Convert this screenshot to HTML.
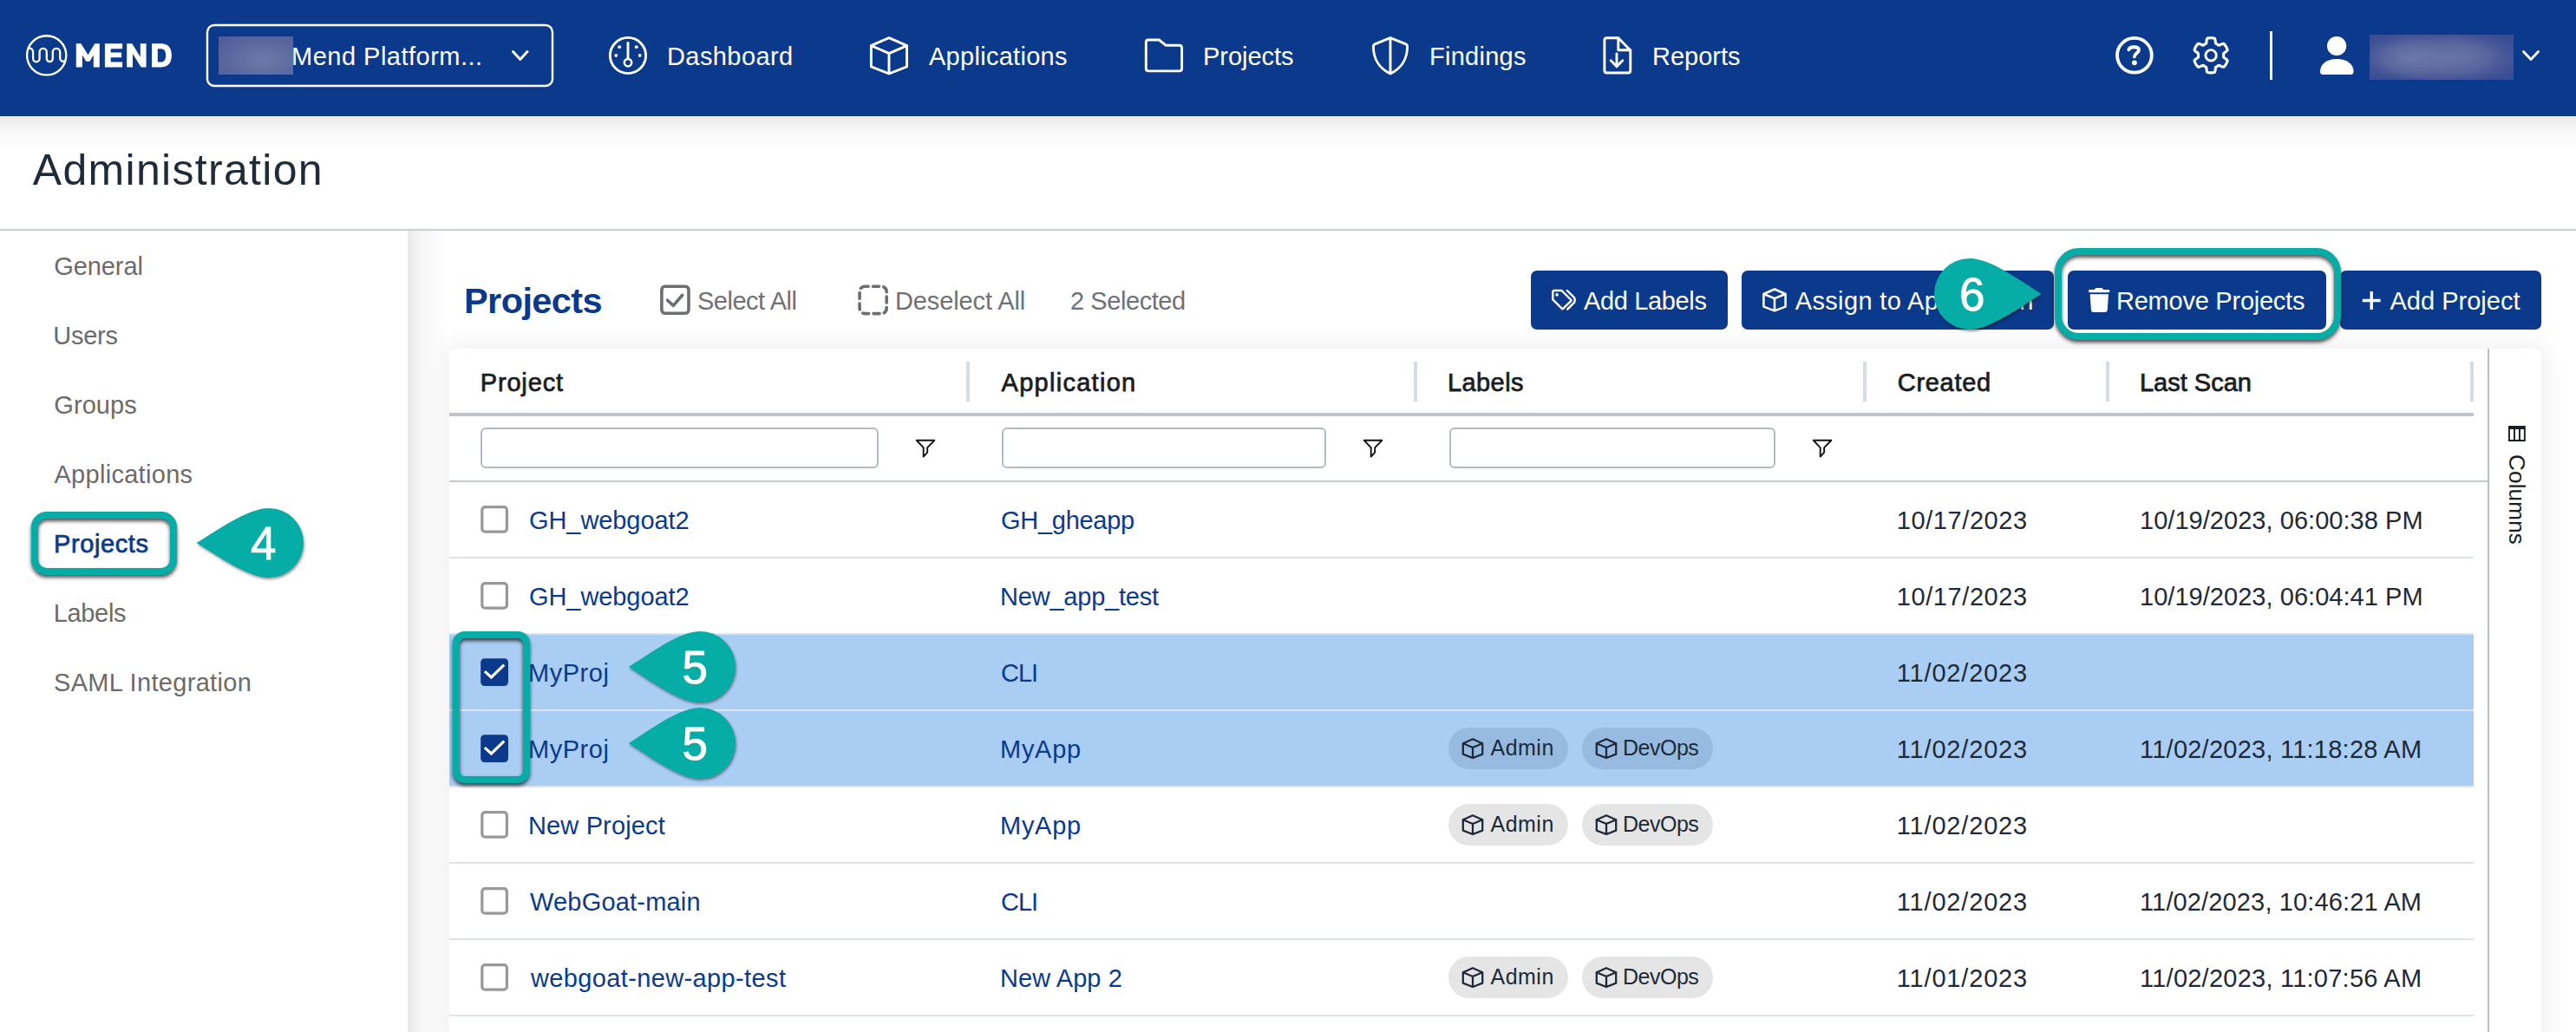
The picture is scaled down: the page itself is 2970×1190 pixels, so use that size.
<!DOCTYPE html><html><head><meta charset='utf-8'><title>Mend - Administration</title><style>
*{box-sizing:border-box}
html,body{margin:0;padding:0}
body{width:2970px;height:1190px;overflow:hidden;position:relative;background:#fff;font-family:"Liberation Sans",sans-serif}
.a{position:absolute}
.t{position:absolute;line-height:1;white-space:nowrap}
svg{position:absolute;overflow:visible}
</style></head><body>
<div class=a style='left:0;top:0;width:2970px;height:134px;background:#0b3a8c'></div>
<div class=a style='left:0;top:134px;width:2970px;height:40px;background:linear-gradient(rgba(0,0,0,0.085),rgba(0,0,0,0.045) 30%,rgba(0,0,0,0.015) 65%,rgba(0,0,0,0))'></div>
<svg class=a style='left:0;top:0' width=2970 height=134 viewBox='0 0 2970 134' fill='none' stroke='#fff' stroke-linecap='round' stroke-linejoin='round'>
<circle cx='53.7' cy='63.8' r='22.6' stroke-width='2.4'/>
<path stroke-width='2.3' d='M33.2 55.6 C36 55.2 38.1 57 38.1 60 L38.1 67.6 A3.75 3.75 0 0 0 45.6 67.6 L45.6 60 A4.1 4.1 0 0 1 53.8 60 L53.8 67.6 A3.5 3.5 0 0 0 60.8 67.6 L60.8 60 A4.2 4.2 0 0 1 69.2 60 L69.2 66.8 C69.2 70.2 71.8 71.6 74.6 70.2'/>
<path fill='#fff' stroke='none' fill-rule='evenodd' d='M87.8 77.4 L87.8 50.3 L93.4 50.3 L101.5 63.2 L109.3 50.3 L114.8 50.3 L114.8 77.4 L107.8 77.4 L107.8 63.5 L103.5 70.8 L99.2 70.8 L94.9 63.5 L94.9 77.4 Z M120.9 50.3 L141.1 50.3 L141.1 56.2 L127.7 56.2 L127.7 60.5 L140.1 60.5 L140.1 66.3 L127.7 66.3 L127.7 71.6 L141.1 71.6 L141.1 77.4 L120.9 77.4 Z M146.2 77.4 L146.2 50.3 L152.3 50.3 L161.8 65.8 L161.8 50.3 L168.6 50.3 L168.6 77.4 L162.7 77.4 L153 62 L153 77.4 Z M175 50.3 L186 50.3 C193.8 50.3 197.9 55.2 197.9 63.8 C197.9 72.5 193.8 77.4 186 77.4 L175 77.4 Z M181.8 56.2 L185.4 56.2 C189.6 56.2 191.1 59.2 191.1 63.8 C191.1 68.5 189.6 71.6 185.4 71.6 L181.8 71.6 Z'/>
<rect x='239' y='29' width='398' height='70' rx='8' stroke-width='2.4'/>
<path stroke-width='3' d='M591.5 59.5 L599.8 68.5 L608 59.5'/>
<circle cx='724' cy='64' r='20.6' stroke-width='2.9'/>
<path stroke-width='2.9' d='M724 49.5 L724 67.2'/>
<circle cx='724' cy='72.2' r='4.2' stroke-width='2.5'/>
<circle cx='714.2' cy='54.2' r='1.9' fill='#fff' stroke='none'/>
<circle cx='733.8' cy='54.2' r='1.9' fill='#fff' stroke='none'/>
<circle cx='710.3' cy='63.9' r='1.9' fill='#fff' stroke='none'/>
<circle cx='737.7' cy='63.9' r='1.9' fill='#fff' stroke='none'/>
<path stroke-width='2.9' d='M1025 43.6 L1045.6 52.6 L1045.6 76.8 L1025 85 L1004.4 76.8 L1004.4 52.6 Z M1004.4 52.6 L1025 61.6 L1045.6 52.6 M1025 61.6 L1025 85'/>
<path stroke-width='2.9' d='M1321.3 48.8 Q1321.3 46 1324 46 L1336.3 46 L1344.3 52.3 L1359.6 52.3 Q1362.6 52.3 1362.6 55.3 L1362.6 79 Q1362.6 81.9 1359.6 81.9 L1324.3 81.9 Q1321.3 81.9 1321.3 79 Z'/>
<path stroke-width='2.9' d='M1603 43.6 L1585.2 50.8 Q1583.4 51.6 1583.4 53.6 C1583.4 68.5 1591 79.5 1603 85 C1615 79.5 1622.6 68.5 1622.6 53.6 Q1622.6 51.6 1620.8 50.8 Z M1603 43.6 L1603 85'/>
<path stroke-width='2.9' d='M1849.9 46.5 Q1849.9 43.8 1852.6 43.8 L1865.8 43.8 L1879.8 58 L1879.8 81.2 Q1879.8 84 1877 84 L1852.6 84 Q1849.9 84 1849.9 81.2 Z M1865.8 43.8 L1865.8 57.8 L1879.8 57.8 M1864 62 L1864 76.6 M1857.2 69.8 L1864 76.6 L1870.8 69.8'/>
<circle cx='2460.9' cy='63.8' r='19.9' stroke-width='3.8'/>
<path stroke-width='3.8' d='M2454.3 57.4 C2455.6 53.3 2465.6 53.1 2466 57.6 C2466.3 60.6 2461.3 61.4 2460.8 65.4'/>
<circle cx='2460.9' cy='72.3' r='2.9' fill='#fff' stroke='none'/>
<path stroke-width='3.1' d='M2549.10 43.70 L2549.80 43.71 L2550.50 43.75 L2551.20 43.81 L2551.90 43.90 L2552.59 44.01 L2553.26 44.23 L2553.77 45.08 L2554.08 46.44 L2554.24 47.98 L2554.37 49.32 L2554.60 50.18 L2555.04 50.46 L2555.50 50.68 L2555.95 50.91 L2556.40 51.16 L2556.84 51.42 L2557.26 51.70 L2557.68 51.99 L2558.15 52.22 L2559.00 52.00 L2560.23 51.44 L2561.65 50.81 L2562.98 50.40 L2563.97 50.41 L2564.50 50.88 L2564.94 51.43 L2565.36 51.99 L2565.76 52.56 L2566.15 53.15 L2566.51 53.75 L2566.85 54.36 L2567.17 54.99 L2567.46 55.62 L2567.74 56.27 L2567.99 56.93 L2568.13 57.62 L2567.65 58.48 L2566.63 59.43 L2565.37 60.34 L2564.27 61.12 L2563.65 61.76 L2563.62 62.27 L2563.66 62.78 L2563.69 63.29 L2563.70 63.80 L2563.69 64.31 L2563.66 64.82 L2563.62 65.33 L2563.65 65.84 L2564.27 66.48 L2565.37 67.26 L2566.63 68.17 L2567.65 69.12 L2568.13 69.98 L2567.99 70.67 L2567.74 71.33 L2567.46 71.98 L2567.17 72.61 L2566.85 73.24 L2566.51 73.85 L2566.15 74.45 L2565.76 75.04 L2565.36 75.61 L2564.94 76.17 L2564.50 76.72 L2563.97 77.19 L2562.98 77.20 L2561.65 76.79 L2560.23 76.16 L2559.00 75.60 L2558.15 75.38 L2557.68 75.61 L2557.26 75.90 L2556.84 76.18 L2556.40 76.44 L2555.95 76.69 L2555.50 76.92 L2555.04 77.14 L2554.60 77.42 L2554.37 78.28 L2554.24 79.62 L2554.08 81.16 L2553.77 82.52 L2553.26 83.37 L2552.59 83.59 L2551.90 83.70 L2551.20 83.79 L2550.50 83.85 L2549.80 83.89 L2549.10 83.90 L2548.40 83.89 L2547.70 83.85 L2547.00 83.79 L2546.30 83.70 L2545.61 83.59 L2544.94 83.37 L2544.43 82.52 L2544.12 81.16 L2543.96 79.62 L2543.83 78.28 L2543.60 77.42 L2543.16 77.14 L2542.70 76.92 L2542.25 76.69 L2541.80 76.44 L2541.36 76.18 L2540.94 75.90 L2540.52 75.61 L2540.05 75.38 L2539.20 75.60 L2537.97 76.16 L2536.55 76.79 L2535.22 77.20 L2534.23 77.19 L2533.70 76.72 L2533.26 76.17 L2532.84 75.61 L2532.44 75.04 L2532.05 74.45 L2531.69 73.85 L2531.35 73.24 L2531.03 72.61 L2530.74 71.98 L2530.46 71.33 L2530.21 70.67 L2530.07 69.98 L2530.55 69.12 L2531.57 68.17 L2532.83 67.26 L2533.93 66.48 L2534.55 65.84 L2534.58 65.33 L2534.54 64.82 L2534.51 64.31 L2534.50 63.80 L2534.51 63.29 L2534.54 62.78 L2534.58 62.27 L2534.55 61.76 L2533.93 61.12 L2532.83 60.34 L2531.57 59.43 L2530.55 58.48 L2530.07 57.62 L2530.21 56.93 L2530.46 56.27 L2530.74 55.62 L2531.03 54.99 L2531.35 54.36 L2531.69 53.75 L2532.05 53.15 L2532.44 52.56 L2532.84 51.99 L2533.26 51.43 L2533.70 50.88 L2534.23 50.41 L2535.22 50.40 L2536.55 50.81 L2537.97 51.44 L2539.20 52.00 L2540.05 52.22 L2540.52 51.99 L2540.94 51.70 L2541.36 51.42 L2541.80 51.16 L2542.25 50.91 L2542.70 50.68 L2543.16 50.46 L2543.60 50.18 L2543.83 49.32 L2543.96 47.98 L2544.12 46.44 L2544.43 45.08 L2544.94 44.23 L2545.61 44.01 L2546.30 43.90 L2547.00 43.81 L2547.70 43.75 L2548.40 43.71 Z'/>
<circle cx='2549.1' cy='63.8' r='6.2' stroke-width='2.9'/>
</svg>
<div class=a style='left:2617px;top:36px;width:2.5px;height:56px;background:#fff'></div>
<svg class=a style='left:0;top:0' width=2970 height=134 viewBox='0 0 2970 134'><circle cx='2694.1' cy='53' r='11.1' fill='#fff'/><path fill='#fff' d='M2675 82.6 C2675 73.6 2683 68 2694.2 68 C2705.5 68 2713.6 73.6 2713.6 82.6 Q2713.6 86 2710.5 86 L2678 86 Q2675 86 2675 82.6 Z'/></svg>
<svg class=a style='left:0;top:0' width=2970 height=134 viewBox='0 0 2970 134' fill='none' stroke='#fff' stroke-linecap='round' stroke-linejoin='round'><path stroke-width='2.8' d='M2909.5 59.5 L2918 68.5 L2926.5 59.5'/></svg>
<div class=a style='left:252px;top:42px;width:86px;height:44px;background:radial-gradient(ellipse 75% 80% at 60% 62%,#6e7aa8,#5e6aa0 55%,#4f5e9a 100%)'></div>
<div class=a style='left:2732px;top:40px;width:166px;height:52px;background:radial-gradient(ellipse 30% 45% at 30% 52%,rgba(110,122,168,0.9),rgba(110,122,168,0) 100%),radial-gradient(ellipse 30% 45% at 62% 50%,rgba(106,118,166,0.8),rgba(106,118,166,0) 100%),radial-gradient(ellipse 62% 62% at 48% 50%,#5f6ba2,#53609c 55%,#3a4d94 100%)'></div>
<div class=a style='left:0;top:264px;width:2970px;height:2px;background:#c9d0d5'></div>
<div class=a style='left:470px;top:266px;width:48px;height:924px;background:linear-gradient(90deg,rgba(0,0,0,0.085),rgba(0,0,0,0.035) 30%,rgba(0,0,0,0.01) 75%,rgba(0,0,0,0) 100%)'></div>
<div class=a style='left:518px;top:402px;width:2412px;height:900px;border-radius:8px;background:#fff;box-shadow:0 0 28px 4px rgba(0,0,0,0.07)'></div>
<svg class=a style='left:0;top:0' width=2970 height=420 viewBox='0 0 2970 420' fill='none' stroke-linecap='round' stroke-linejoin='round'>
<rect x='762.9' y='330.2' width='31.1' height='31.1' rx='4' stroke='#6b6e72' stroke-width='3.6'/>
<path d='M769.6 346.2 L776.3 352.4 L786.8 340.3' stroke='#6b6e72' stroke-width='3.6'/>
<rect x='991.1' y='330.2' width='31.1' height='31.4' rx='6' stroke='#6b6e72' stroke-width='3.6' stroke-dasharray='7 5.4' stroke-dashoffset='3' stroke-linecap='round'/>
</svg>
<div class=a style='left:1765px;top:312px;width:227px;height:68px;border-radius:7px;background:#0b3a8c'></div>
<div class=a style='left:2008px;top:312px;width:360px;height:68px;border-radius:7px;background:#0b3a8c'></div>
<div class=a style='left:2384px;top:312px;width:298px;height:68px;border-radius:7px;background:#0b3a8c'></div>
<div class=a style='left:2698px;top:312px;width:232px;height:68px;border-radius:7px;background:#0b3a8c'></div>
<svg class=a style='left:0;top:0' width=2970 height=420 viewBox='0 0 2970 420' fill='none' stroke='#fff' stroke-linecap='round' stroke-linejoin='round'>
<path stroke-width='2.4' d='M1790.3 336.9 Q1790.3 335 1792.2 335 L1800.5 335 L1811 345.5 Q1812 346.4 1811 347.3 L1802.4 355.7 Q1801.5 356.6 1800.6 355.7 L1790.3 345.4 Z M1806.8 335 L1815 343.2 Q1816.6 346 1815 348.8 L1807.2 356.6'/>
<circle cx='1795.1' cy='339.9' r='1.8' fill='#fff' stroke='none'/>
<path stroke-width='2.5' d='M2046 333.5 L2058.6 339 L2058.6 353.6 L2046 358.4 L2033.4 353.6 L2033.4 339 Z M2033.4 339 L2046 344.2 L2058.6 339 M2046 344.2 L2046 358.4'/>
<path stroke-width='3.4' d='M2734.2 336 L2734.2 357 M2723.8 346.5 L2744.6 346.5' stroke-linecap='butt'/>
</svg>
<svg class=a style='left:0;top:0' width=2970 height=420 viewBox='0 0 2970 420'><path fill='#fff' d='M2414.7 334 L2416.6 332 L2423.4 332 L2425.2 334 L2431 334 Q2432.4 334 2432.4 335.6 Q2432.4 337.2 2431 337.2 L2409.4 337.2 Q2408 337.2 2408 335.6 Q2408 334 2409.4 334 Z M2409.7 339.2 L2431 339.2 L2429.8 357 Q2429.6 360 2426.8 360 L2413.7 360 Q2411 360 2410.9 357 Z'/></svg>
<div class=a style='left:1114px;top:417px;width:3.6px;height:46px;background:#d6dce6'></div>
<div class=a style='left:1630px;top:417px;width:3.6px;height:46px;background:#d6dce6'></div>
<div class=a style='left:2148px;top:417px;width:3.6px;height:46px;background:#d6dce6'></div>
<div class=a style='left:2428px;top:417px;width:3.6px;height:46px;background:#d6dce6'></div>
<div class=a style='left:2848px;top:417px;width:3.6px;height:46px;background:#d6dce6'></div>
<div class=a style='left:518px;top:476px;width:2334px;height:3.6px;background:#c1c4c9'></div>
<div class=a style='left:554px;top:493px;width:459.0px;height:47px;border:2.2px solid #b3bac6;border-radius:6px;background:#fff'></div>
<div class=a style='left:1154.6px;top:493px;width:374.4px;height:47px;border:2.2px solid #b3bac6;border-radius:6px;background:#fff'></div>
<div class=a style='left:1671px;top:493px;width:376.0px;height:47px;border:2.2px solid #b3bac6;border-radius:6px;background:#fff'></div>
<div class=a style='left:518px;top:554px;width:2351px;height:2px;background:#c3cad4'></div>
<div class=a style='left:2868px;top:402px;width:2px;height:788px;background:#b9bfc7'></div>
<div class=a style='left:518px;top:731px;width:2334px;height:176px;background:#a9cdf3'></div>
<div class=a style='left:518px;top:642px;width:2334px;height:2px;background:#dde3ea'></div>
<div class=a style='left:518px;top:730px;width:2334px;height:2px;background:#dde3ea'></div>
<div class=a style='left:518px;top:818px;width:2334px;height:2px;background:#dfe5ec'></div>
<div class=a style='left:518px;top:906px;width:2334px;height:2px;background:#dde3ea'></div>
<div class=a style='left:518px;top:994px;width:2334px;height:2px;background:#dde3ea'></div>
<div class=a style='left:518px;top:1082px;width:2334px;height:2px;background:#dde3ea'></div>
<div class=a style='left:518px;top:1170px;width:2334px;height:2px;background:#dde3ea'></div>
<svg class=a style='left:0;top:0' width=2970 height=1190 viewBox='0 0 2970 1190' fill='none' stroke-linecap='round' stroke-linejoin='round'>
<path transform='translate(0 0)' stroke='#111' stroke-width='1.9' d='M1056.8 507.8 L1077.4 507.8 L1069.2 516.2 L1069.2 521.6 L1064.7 526.6 L1064.7 516.2 Z'/>
<path transform='translate(516 0)' stroke='#111' stroke-width='1.9' d='M1056.8 507.8 L1077.4 507.8 L1069.2 516.2 L1069.2 521.6 L1064.7 526.6 L1064.7 516.2 Z'/>
<path transform='translate(1034 0)' stroke='#111' stroke-width='1.9' d='M1056.8 507.8 L1077.4 507.8 L1069.2 516.2 L1069.2 521.6 L1064.7 526.6 L1064.7 516.2 Z'/>
<rect x='555.8' y='584.6' width='28.6' height='28.6' rx='3.5' stroke='#989898' stroke-width='3.2'/>
<rect x='555.8' y='672.6' width='28.6' height='28.6' rx='3.5' stroke='#989898' stroke-width='3.2'/>
<rect x='554.2' y='759.2' width='31.8' height='31.8' rx='4.5' fill='#0b3a8c' stroke='none'/>
<path d='M558.9 774.1 L566.4 781 L581.2 766.7' stroke='#fff' stroke-width='3.2' stroke-linecap='butt' stroke-linejoin='miter'/>
<rect x='554.2' y='847.2' width='31.8' height='31.8' rx='4.5' fill='#0b3a8c' stroke='none'/>
<path d='M558.9 862.1 L566.4 869 L581.2 854.7' stroke='#fff' stroke-width='3.2' stroke-linecap='butt' stroke-linejoin='miter'/>
<rect x='555.8' y='936.6' width='28.6' height='28.6' rx='3.5' stroke='#989898' stroke-width='3.2'/>
<rect x='555.8' y='1024.6' width='28.6' height='28.6' rx='3.5' stroke='#989898' stroke-width='3.2'/>
<rect x='555.8' y='1112.6' width='28.6' height='28.6' rx='3.5' stroke='#989898' stroke-width='3.2'/>
</svg>
<div class=a style='left:1670px;top:839px;width:138px;height:48px;border-radius:24px;background:#97bbe0'></div>
<div class=a style='left:1824px;top:839px;width:151px;height:48px;border-radius:24px;background:#97bbe0'></div>
<div class=a style='left:1670px;top:927px;width:138px;height:48px;border-radius:24px;background:#e5e5e5'></div>
<div class=a style='left:1824px;top:927px;width:151px;height:48px;border-radius:24px;background:#e5e5e5'></div>
<div class=a style='left:1670px;top:1103px;width:138px;height:48px;border-radius:24px;background:#e5e5e5'></div>
<div class=a style='left:1824px;top:1103px;width:151px;height:48px;border-radius:24px;background:#e5e5e5'></div>
<svg class=a style='left:0;top:0' width=2970 height=1190 viewBox='0 0 2970 1190' fill='none' stroke='#1e2a38' stroke-linecap='round' stroke-linejoin='round'>
<path transform='translate(0 0)' stroke-width='2.3' d='M1698 852.3 L1709.2 857.2 L1709.2 869.6 L1698 874 L1686.8 869.6 L1686.8 857.2 Z M1686.8 857.2 L1698 862 L1709.2 857.2 M1698 862 L1698 874'/>
<path transform='translate(154 0)' stroke-width='2.3' d='M1698 852.3 L1709.2 857.2 L1709.2 869.6 L1698 874 L1686.8 869.6 L1686.8 857.2 Z M1686.8 857.2 L1698 862 L1709.2 857.2 M1698 862 L1698 874'/>
<path transform='translate(0 88)' stroke-width='2.3' d='M1698 852.3 L1709.2 857.2 L1709.2 869.6 L1698 874 L1686.8 869.6 L1686.8 857.2 Z M1686.8 857.2 L1698 862 L1709.2 857.2 M1698 862 L1698 874'/>
<path transform='translate(154 88)' stroke-width='2.3' d='M1698 852.3 L1709.2 857.2 L1709.2 869.6 L1698 874 L1686.8 869.6 L1686.8 857.2 Z M1686.8 857.2 L1698 862 L1709.2 857.2 M1698 862 L1698 874'/>
<path transform='translate(0 264)' stroke-width='2.3' d='M1698 852.3 L1709.2 857.2 L1709.2 869.6 L1698 874 L1686.8 869.6 L1686.8 857.2 Z M1686.8 857.2 L1698 862 L1709.2 857.2 M1698 862 L1698 874'/>
<path transform='translate(154 264)' stroke-width='2.3' d='M1698 852.3 L1709.2 857.2 L1709.2 869.6 L1698 874 L1686.8 869.6 L1686.8 857.2 Z M1686.8 857.2 L1698 862 L1709.2 857.2 M1698 862 L1698 874'/>
</svg>
<svg class=a style='left:2892.2px;top:490.9px' width=20 height=18 viewBox='0 0 20 18'><path fill='#1a1e23' fill-rule='evenodd' d='M0 0 H19.8 V17.9 H0 Z M1.9 4 V16 H6.0 V4 Z M7.9 4 V16 H12 V4 Z M13.9 4 V16 H17.9 V4 Z'/></svg>
<div class=t style='left:2892.5px;top:524px;font-size:26px;color:#1a1e23;transform-origin:0 0;transform:translate(22px,0) rotate(90deg);letter-spacing:0.2px'>Columns</div>
<div class=t id=plat style='left:336.0px;top:51px;font-size:29.0px;font-weight:400;color:#fff;letter-spacing:0.49px;'>Mend Platform...</div>
<div class=t id=dash style='left:769.0px;top:51px;font-size:29.0px;font-weight:400;color:#fff;letter-spacing:0.41px;'>Dashboard</div>
<div class=t id=apps style='left:1071.0px;top:51px;font-size:29.0px;font-weight:400;color:#fff;letter-spacing:0.28px;'>Applications</div>
<div class=t id=projn style='left:1387.0px;top:51px;font-size:29.0px;font-weight:400;color:#fff;letter-spacing:-0.04px;'>Projects</div>
<div class=t id=find style='left:1648.0px;top:51px;font-size:29.0px;font-weight:400;color:#fff;letter-spacing:0.27px;'>Findings</div>
<div class=t id=rep style='left:1905.0px;top:51px;font-size:29.0px;font-weight:400;color:#fff;letter-spacing:-0.01px;'>Reports</div>
<div class=t id=admin style='left:37.8px;top:171px;font-size:50.0px;font-weight:400;color:#1f2b38;letter-spacing:1.31px;'>Administration</div>
<div class=t id=s1 style='left:62.3px;top:293px;font-size:29.0px;font-weight:400;color:#6b6b6b;letter-spacing:-0.10px;'>General</div>
<div class=t id=s2 style='left:61.3px;top:373px;font-size:29.0px;font-weight:400;color:#6b6b6b;letter-spacing:-0.26px;'>Users</div>
<div class=t id=s3 style='left:62.3px;top:453px;font-size:29.0px;font-weight:400;color:#6b6b6b;letter-spacing:0.06px;'>Groups</div>
<div class=t id=s4 style='left:62.4px;top:533px;font-size:29.0px;font-weight:400;color:#6b6b6b;letter-spacing:0.30px;'>Applications</div>
<div class=t id=s5 style='-webkit-text-stroke:0.75px currentColor;left:62.0px;top:613px;font-size:29.0px;font-weight:400;color:#0b3a8c;letter-spacing:0.61px;'>Projects</div>
<div class=t id=s6 style='left:61.7px;top:693px;font-size:29.0px;font-weight:400;color:#6b6b6b;letter-spacing:-0.33px;'>Labels</div>
<div class=t id=s7 style='left:62.0px;top:773px;font-size:29.0px;font-weight:400;color:#6b6b6b;letter-spacing:0.32px;'>SAML Integration</div>
<div class=t id=ptitle style='left:535.0px;top:326px;font-size:41.5px;font-weight:700;color:#0b3a8c;letter-spacing:-0.60px;'>Projects</div>
<div class=t id=selall style='left:804.0px;top:333px;font-size:29.0px;font-weight:400;color:#6e7175;letter-spacing:-0.49px;'>Select All</div>
<div class=t id=desel style='left:1032.0px;top:333px;font-size:29.0px;font-weight:400;color:#6e7175;letter-spacing:-0.11px;'>Deselect All</div>
<div class=t id=nsel style='left:1234.0px;top:333px;font-size:29.0px;font-weight:400;color:#6e7175;letter-spacing:-0.43px;'>2 Selected</div>
<div class=t id=b1 style='left:1826.0px;top:333px;font-size:29.0px;font-weight:400;color:#fff;letter-spacing:-0.35px;'>Add Labels</div>
<div class=t id=b2 style='left:2069.7px;top:333px;font-size:29.0px;font-weight:400;color:#fff;letter-spacing:0.36px;'>Assign to Application</div>
<div class=t id=b3 style='left:2440.0px;top:333px;font-size:29.0px;font-weight:400;color:#fff;letter-spacing:-0.24px;'>Remove Projects</div>
<div class=t id=b4 style='left:2755.5px;top:333px;font-size:29.0px;font-weight:400;color:#fff;letter-spacing:0.01px;'>Add Project</div>
<div class=t id=h1 style='-webkit-text-stroke:0.75px currentColor;left:553.7px;top:427px;font-size:29.0px;font-weight:400;color:#1a1e23;letter-spacing:0.85px;'>Project</div>
<div class=t id=h2 style='-webkit-text-stroke:0.75px currentColor;left:1154.6px;top:427px;font-size:29.0px;font-weight:400;color:#1a1e23;letter-spacing:1.27px;'>Application</div>
<div class=t id=h3 style='-webkit-text-stroke:0.75px currentColor;left:1669.0px;top:427px;font-size:29.0px;font-weight:400;color:#1a1e23;letter-spacing:0.41px;'>Labels</div>
<div class=t id=h4 style='-webkit-text-stroke:0.75px currentColor;left:2187.8px;top:427px;font-size:29.0px;font-weight:400;color:#1a1e23;letter-spacing:0.69px;'>Created</div>
<div class=t id=h5 style='-webkit-text-stroke:0.75px currentColor;left:2467.0px;top:427px;font-size:29.0px;font-weight:400;color:#1a1e23;letter-spacing:-0.01px;'>Last Scan</div>
<div class=t id=rp0 style='left:610.0px;top:586px;font-size:29.0px;font-weight:400;color:#0b3a8c;letter-spacing:-0.08px;'>GH_webgoat2</div>
<div class=t id=ra0 style='left:1154.0px;top:586px;font-size:29.0px;font-weight:400;color:#0b3a8c;letter-spacing:-0.28px;'>GH_gheapp</div>
<div class=t id=rc0 style='left:2186.8px;top:586px;font-size:29.0px;font-weight:400;color:#1e2a38;letter-spacing:0.58px;'>10/17/2023</div>
<div class=t id=rl0 style='left:2467.0px;top:586px;font-size:29.0px;font-weight:400;color:#1e2a38;letter-spacing:0.04px;'>10/19/2023, 06:00:38 PM</div>
<div class=t id=rp1 style='left:610.0px;top:674px;font-size:29.0px;font-weight:400;color:#0b3a8c;letter-spacing:-0.08px;'>GH_webgoat2</div>
<div class=t id=ra1 style='left:1153.0px;top:674px;font-size:29.0px;font-weight:400;color:#0b3a8c;letter-spacing:-0.21px;'>New_app_test</div>
<div class=t id=rc1 style='left:2186.8px;top:674px;font-size:29.0px;font-weight:400;color:#1e2a38;letter-spacing:0.58px;'>10/17/2023</div>
<div class=t id=rl1 style='left:2467.0px;top:674px;font-size:29.0px;font-weight:400;color:#1e2a38;letter-spacing:0.04px;'>10/19/2023, 06:04:41 PM</div>
<div class=t id=rp2 style='left:609.0px;top:762px;font-size:29.0px;font-weight:400;color:#0b3a8c;letter-spacing:0.52px;'>MyProj</div>
<div class=t id=ra2 style='left:1154.0px;top:762px;font-size:29.0px;font-weight:400;color:#0b3a8c;letter-spacing:-1.04px;'>CLI</div>
<div class=t id=rc2 style='left:2186.8px;top:762px;font-size:29.0px;font-weight:400;color:#1e2a38;letter-spacing:0.82px;'>11/02/2023</div>
<div class=t id=rp3 style='left:609.0px;top:850px;font-size:29.0px;font-weight:400;color:#0b3a8c;letter-spacing:0.52px;'>MyProj</div>
<div class=t id=ra3 style='left:1153.0px;top:850px;font-size:29.0px;font-weight:400;color:#0b3a8c;letter-spacing:0.72px;'>MyApp</div>
<div class=t id=rc3 style='left:2186.8px;top:850px;font-size:29.0px;font-weight:400;color:#1e2a38;letter-spacing:0.82px;'>11/02/2023</div>
<div class=t id=rl3 style='left:2467.0px;top:850px;font-size:29.0px;font-weight:400;color:#1e2a38;letter-spacing:0.24px;'>11/02/2023, 11:18:28 AM</div>
<div class=t id=rp4 style='left:609.0px;top:938px;font-size:29.0px;font-weight:400;color:#0b3a8c;letter-spacing:0.14px;'>New Project</div>
<div class=t id=ra4 style='left:1153.0px;top:938px;font-size:29.0px;font-weight:400;color:#0b3a8c;letter-spacing:0.72px;'>MyApp</div>
<div class=t id=rc4 style='left:2186.8px;top:938px;font-size:29.0px;font-weight:400;color:#1e2a38;letter-spacing:0.82px;'>11/02/2023</div>
<div class=t id=rp5 style='left:611.0px;top:1026px;font-size:29.0px;font-weight:400;color:#0b3a8c;letter-spacing:0.19px;'>WebGoat-main</div>
<div class=t id=ra5 style='left:1154.0px;top:1026px;font-size:29.0px;font-weight:400;color:#0b3a8c;letter-spacing:-1.04px;'>CLI</div>
<div class=t id=rc5 style='left:2186.8px;top:1026px;font-size:29.0px;font-weight:400;color:#1e2a38;letter-spacing:0.82px;'>11/02/2023</div>
<div class=t id=rl5 style='left:2467.0px;top:1026px;font-size:29.0px;font-weight:400;color:#1e2a38;letter-spacing:0.14px;'>11/02/2023, 10:46:21 AM</div>
<div class=t id=rp6 style='left:612.0px;top:1114px;font-size:29.0px;font-weight:400;color:#0b3a8c;letter-spacing:0.37px;'>webgoat-new-app-test</div>
<div class=t id=ra6 style='left:1153.0px;top:1114px;font-size:29.0px;font-weight:400;color:#0b3a8c;letter-spacing:0.07px;'>New App 2</div>
<div class=t id=rc6 style='left:2186.8px;top:1114px;font-size:29.0px;font-weight:400;color:#1e2a38;letter-spacing:0.82px;'>11/01/2023</div>
<div class=t id=rl6 style='left:2467.0px;top:1114px;font-size:29.0px;font-weight:400;color:#1e2a38;letter-spacing:0.24px;'>11/02/2023, 11:07:56 AM</div>
<div class=t id=ca3 style='left:1718.5px;top:850px;font-size:25.0px;font-weight:400;color:#1e2a38;letter-spacing:0.49px;'>Admin</div>
<div class=t id=cd3 style='left:1871.0px;top:850px;font-size:25.0px;font-weight:400;color:#1e2a38;letter-spacing:-0.50px;'>DevOps</div>
<div class=t id=ca4 style='left:1718.5px;top:938px;font-size:25.0px;font-weight:400;color:#1e2a38;letter-spacing:0.49px;'>Admin</div>
<div class=t id=cd4 style='left:1871.0px;top:938px;font-size:25.0px;font-weight:400;color:#1e2a38;letter-spacing:-0.50px;'>DevOps</div>
<div class=t id=ca6 style='left:1718.5px;top:1114px;font-size:25.0px;font-weight:400;color:#1e2a38;letter-spacing:0.49px;'>Admin</div>
<div class=t id=cd6 style='left:1871.0px;top:1114px;font-size:25.0px;font-weight:400;color:#1e2a38;letter-spacing:-0.50px;'>DevOps</div>
<div class=a style='left:36px;top:590px;width:168px;height:72.5px;border:8px solid #06aca6;border-radius:18px;filter:drop-shadow(0.5px 3px 2px rgba(0,0,0,0.68))'></div>
<div class=a style='left:2369px;top:286px;width:330px;height:105.5px;border:8px solid #06aca6;border-radius:28px;filter:drop-shadow(0.5px 3px 2px rgba(0,0,0,0.68))'></div>
<div class=a style='left:522.4px;top:728.3px;width:89.10000000000002px;height:175.0px;border:8px solid #06aca6;border-radius:14px;filter:drop-shadow(0.5px 3px 2px rgba(0,0,0,0.68))'></div>
<svg class=a style='left:0;top:0;filter:drop-shadow(1.5px 2.5px 1.5px rgba(0,0,0,0.42))' width=2970 height=1190 viewBox='0 0 2970 1190'><path fill='#06aca6' d='M310.00 586.00 C286.80 586.00 250.35 611.16 226.60 626.00 C250.35 640.84 286.80 666.00 310.00 666.00 A40 40 0 0 0 350.00 626.00 A40 40 0 0 0 310.00 586.00 Z'/></svg>
<div class=t style='left:289px;top:600px;font-size:53px;color:#fff;-webkit-text-stroke:0.9px #fff'>4</div>
<svg class=a style='left:0;top:0;filter:drop-shadow(1.5px 2.5px 1.5px rgba(0,0,0,0.42))' width=2970 height=1190 viewBox='0 0 2970 1190'><path fill='#06aca6' d='M807.00 728.00 C783.22 728.00 749.14 753.79 724.80 769.00 C749.14 784.21 783.22 810.00 807.00 810.00 A41 41 0 0 0 848.00 769.00 A41 41 0 0 0 807.00 728.00 Z'/></svg>
<div class=t style='left:786.5px;top:743px;font-size:53px;color:#fff;-webkit-text-stroke:0.9px #fff'>5</div>
<svg class=a style='left:0;top:0;filter:drop-shadow(1.5px 2.5px 1.5px rgba(0,0,0,0.42))' width=2970 height=1190 viewBox='0 0 2970 1190'><path fill='#06aca6' d='M807.00 816.00 C783.22 816.00 749.14 841.79 724.80 857.00 C749.14 872.21 783.22 898.00 807.00 898.00 A41 41 0 0 0 848.00 857.00 A41 41 0 0 0 807.00 816.00 Z'/></svg>
<div class=t style='left:786.5px;top:831px;font-size:53px;color:#fff;-webkit-text-stroke:0.9px #fff'>5</div>
<svg class=a style='left:0;top:0;filter:drop-shadow(1.5px 2.5px 1.5px rgba(0,0,0,0.42))' width=2970 height=1190 viewBox='0 0 2970 1190'><path fill='#06aca6' d='M2271.00 298.00 C2294.78 298.00 2329.26 323.79 2353.60 339.00 C2329.26 354.21 2294.78 380.00 2271.00 380.00 A41 41 0 0 1 2230.00 339.00 A41 41 0 0 1 2271.00 298.00 Z'/></svg>
<div class=t style='left:2259px;top:313px;font-size:53px;color:#fff;-webkit-text-stroke:0.9px #fff'>6</div>
</body></html>
